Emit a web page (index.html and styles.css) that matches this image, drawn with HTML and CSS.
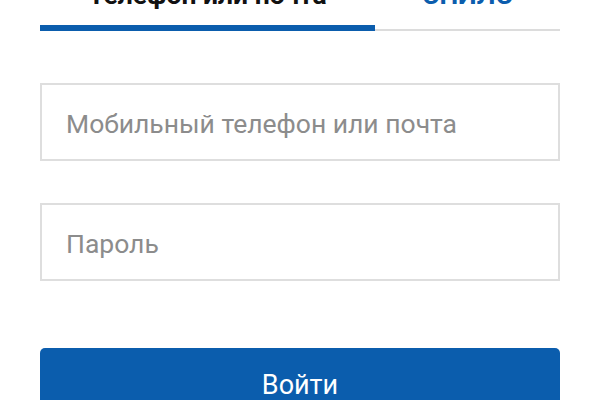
FILE: index.html
```html
<!DOCTYPE html>
<html lang="ru">
<head>
<meta charset="utf-8">
<link rel="stylesheet" href="styles.css">
</head>
<body>
<div class="page">
  <div class="tabs">
    <div class="tab tab-active">Телефон или почта</div>
    <div class="tab tab-other">СНИЛС</div>
  </div>
  <form class="form">
    <input class="field" type="text" placeholder="Мобильный телефон или почта">
    <input class="field field-pass" type="password" placeholder="Пароль">
    <button class="btn" type="button">Войти</button>
  </form>
</div>
</body>
</html>
```

FILE: styles.css
```css
html, body {
  margin: 0;
  padding: 0;
  background: #ffffff;
  overflow: hidden;
}
.page {
  padding: 0 40px;
  margin-top: -19px;
  font-family: Roboto, "Noto Sans", sans-serif;
}
.tabs {
  display: flex;
  align-items: flex-end;
}
.tab {
  font-size: 26.5px;
  line-height: 28px;
  text-align: center;
  box-sizing: border-box;
  white-space: nowrap;
}
.tab-active {
  width: 335px;
  font-weight: 700;
  color: #111111;
  padding-bottom: 16px;
  border-bottom: 6px solid #0b5dad;
}
.tab-other {
  flex: 1;
  font-weight: 700;
  color: #0b5dad;
  padding-bottom: 20px;
  border-bottom: 2px solid #dcdcdc;
}
.form {
  display: flex;
  flex-direction: column;
  padding-top: 52px;
}
.field {
  display: block;
  box-sizing: border-box;
  width: 100%;
  height: 78px;
  margin: 0;
  border: 2px solid #dedede;
  border-radius: 0;
  padding: 2px 24px 0;
  font-family: Roboto, "Noto Sans", sans-serif;
  font-size: 26.5px;
  color: #222;
  background: #fff;
  outline: none;
}
.field::placeholder {
  color: #8c8c8c;
  opacity: 1;
}
.field-pass {
  margin-top: 42px;
}
.btn {
  margin-top: 67px;
  height: 74px;
  width: 100%;
  border: none;
  border-radius: 5px;
  background: #0b5dad;
  color: #ffffff;
  font-family: Roboto, "Noto Sans", sans-serif;
  font-size: 27px;
  padding: 0;
}
```
